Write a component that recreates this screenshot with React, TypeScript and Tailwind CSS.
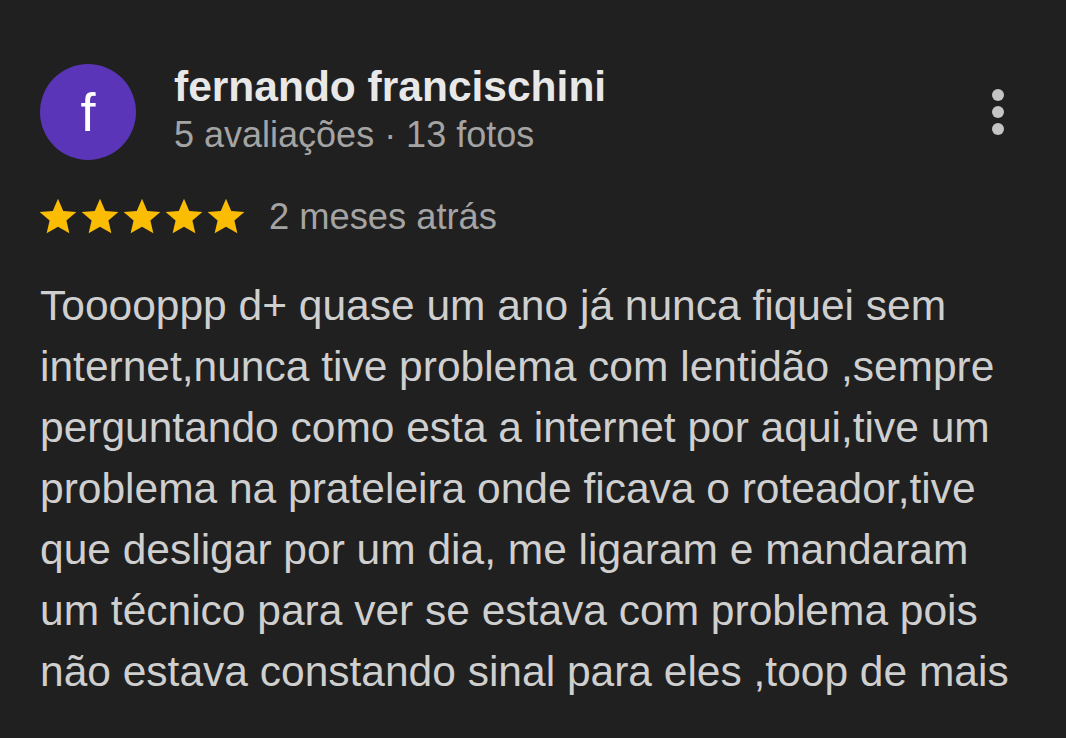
import React from 'react';

const lines = [
  'Tooooppp d+ quase um ano já nunca fiquei sem',
  'internet,nunca tive problema com lentidão ,sempre',
  'perguntando como esta a internet por aqui,tive um',
  'problema na prateleira onde ficava o roteador,tive',
  'que desligar por um dia, me ligaram e mandaram',
  'um técnico para ver se estava com problema pois',
  'não estava constando sinal para eles ,toop de mais',
];

const Star: React.FC = () => (
  <svg className="w-[42px] h-[42px]" viewBox="0 0 24 24">
    <path
      d="M12 1.6l3 6.9 7.5.6-5.7 4.9 1.7 7.3L12 17.5l-6.5 3.8 1.7-7.3-5.7-4.9 7.5-.6z"
      fill="#fbbc04"
    />
  </svg>
);

export default function App() {
  return (
    <div
      className="w-[1066px] h-[738px] bg-[#202020] px-[40px] pt-[64px] overflow-hidden"
      style={{ fontFamily: '"Liberation Sans", Arial, sans-serif' }}
    >
      <div className="flex items-start">
        <div className="w-[96px] h-[96px] rounded-full bg-[#5a35b7] flex items-center justify-center text-white text-[54px] leading-none shrink-0">
          f
        </div>
        <div className="ml-[38px] flex-1">
          <div className="text-[42.5px] leading-[46px] font-bold text-[#e8e8e8]">fernando francischini</div>
          <div className="mt-[3px] text-[36px] leading-[44px] text-[#a4a4a4]">5 avaliações · 13 fotos</div>
        </div>
        <div className="flex flex-col items-center gap-[5px] mt-[25px] mr-[22px]">
          <span className="w-[12px] h-[12px] rounded-full bg-[#c4c4c4]" />
          <span className="w-[12px] h-[12px] rounded-full bg-[#c4c4c4]" />
          <span className="w-[12px] h-[12px] rounded-full bg-[#c4c4c4]" />
        </div>
      </div>

      <div className="flex items-center mt-[35px]">
        <div className="flex -ml-[3px]">
          <Star />
          <Star />
          <Star />
          <Star />
          <Star />
        </div>
        <span className="ml-[22px] text-[36.3px] leading-[44px] text-[#a4a4a4]">2 meses atrás</span>
      </div>

      <div className="mt-[36px] text-[42.5px] leading-[61px] text-[#cfcfcf]">
        {lines.map((l) => (
          <div key={l} className="whitespace-nowrap">{l}</div>
        ))}
      </div>
    </div>
  );
}
